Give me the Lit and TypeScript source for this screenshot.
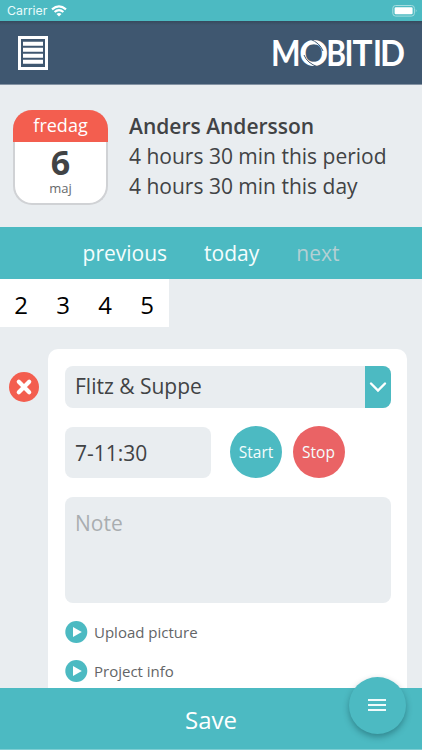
import { LitElement, html, svg, css } from "lit";
import { customElement } from "lit/decorators.js";

const LOGO = [
  { ch: "M", x: 1, w: 29.6 },
  { ch: "O", x: 29.2, w: 29 },
  { ch: "B", x: 56.3, w: 19.8 },
  { ch: "I", x: 74.4, w: 9 },
  { ch: "T", x: 82.5, w: 20 },
  { ch: "I", x: 102.9, w: 9 },
  { ch: "D", x: 110, w: 25 },
];

@customElement("app-root")
export class AppRoot extends LitElement {
  static styles = css`
    :host {
      display: flex;
      flex-direction: column;
      position: relative;
      height: 750px;
      overflow: hidden;
      background: #e9edf0;
      color: #414345;
      font-family: "Open Sans", "Noto Sans", sans-serif;
    }
    * { box-sizing: border-box; }
    svg { display: block; }
    .status {
      flex: none;
      height: 21px;
      background: #4cbac2;
      color: #fff;
      display: flex;
      align-items: center;
      padding: 1px 4px 0 7px;
      font: 12.3px/20px Inter, Roboto, sans-serif;
    }
    .carrier { width: 44px; white-space: nowrap; color: #e9fbfb; }
    .battery { margin-left: auto; }
    .header {
      flex: none;
      height: 64px;
      background: linear-gradient(#36495d, #3f5770 4px, #3f5770);
      display: flex;
      align-items: center;
      padding: 0 16px 0 18px;
      justify-content: space-between;
      border-bottom: 1px solid #8493a4;
    }
    .logo-text { font: 700 36px Lato, sans-serif; fill: #fff; }
    .person {
      flex: none;
      height: 142px;
      display: flex;
      padding: 25px 13px 0;
      gap: 21px;
    }
    .date {
      width: 95px;
      height: 95px;
      border-radius: 19px;
      background: #fff;
      border: 2px solid #d0d2d5;
      border-top: 0;
      border-bottom-width: 2px;
      text-align: center;
      display: flex;
      flex-direction: column;
    }
    .weekday {
      margin: 0 -2px;
      height: 32px;
      background: #f35e4f;
      border-radius: 19px 19px 0 0;
      color: #fff;
      font-size: 18px;
      line-height: 31px;
    }
    .day { font-size: 34px; line-height: 40px; font-weight: 700; }
    .month { font-size: 13px; line-height: 14px; margin-top: -1px; color: #66686a; }
    .summary { font-size: 21px; line-height: 30px; white-space: nowrap; padding-top: 1px; }
    .name { font-weight: 600; }
    .nav {
      flex: none;
      height: 52px;
      background: #4cbac2;
      color: #f4fdfd;
      display: flex;
      justify-content: center;
      gap: 37px;
      font-size: 21px;
      line-height: 53px;
    }
    .off { color: #b4d0d4; }
    .days {
      flex: none;
      width: 169px;
      height: 48px;
      background: #fff;
      color: #000;
      display: grid;
      grid-template-columns: repeat(4, 42px);
      text-align: center;
      font-size: 24px;
      line-height: 51px;
    }
    .entry {
      flex: 1;
      min-height: 0;
      display: flex;
      padding: 22px 15px 0 9px;
      gap: 9px;
    }
    .remove { width: 30px; flex: none; padding-top: 23px; }
    .card {
      flex: 1;
      background: #fff;
      border-radius: 10px 10px 0 0;
      padding: 17px 16px 0 17px;
    }
    .field { background: #e9edf0; border-radius: 8px; font-size: 21px; padding-left: 10px; }
    .select {
      height: 42px;
      line-height: 41px;
      display: flex;
      justify-content: space-between;
      overflow: hidden;
    }
    .arrow {
      width: 26px;
      background: #4cbac2;
      display: grid;
      place-items: center;
    }
    .times { display: flex; margin-top: 18px; height: 53px; }
    .time { width: 146px; height: 51px; margin-top: 1px; line-height: 52px; }
    .round {
      width: 52px;
      height: 52px;
      border-radius: 50%;
      background: #4cbac2;
      color: #f4fdfd;
      text-align: center;
      font-size: 15.5px;
      line-height: 52px;
      margin-left: 19px;
    }
    .stop { background: #ea6365; margin-left: 10.5px; }
    .note { margin-top: 18px; height: 106px; line-height: 53px; color: #a9adb0; }
    .links { margin-top: 17px; display: grid; gap: 15px; }
    .link { display: flex; align-items: center; gap: 6px; height: 24px; font-size: 15px; color: #636567; }
    .save {
      flex: none;
      height: 62px;
      background: #4cbac2;
      border-bottom: 1px solid #7fced3;
      color: #fff;
      text-align: center;
      font-size: 24px;
      line-height: 63px;
    }
    .fab {
      position: absolute;
      right: 16.5px;
      bottom: 16.5px;
      width: 57px;
      height: 57px;
      border-radius: 50%;
      background: #4cbac2;
      box-shadow: 0 3px 6px rgba(0, 40, 50, 0.35);
      display: grid;
      place-items: center;
    }
  `;

  private link(label: string) {
    return html`<div class="link">
      <svg width="23" height="23" viewBox="0 0 23 23">
        <circle cx="11.3" cy="11" r="11" fill="#4cbac2" />
        <path d="M8 6 L16.8 11 L8 16 Z" fill="#fff" />
      </svg>
      <span>${label}</span>
    </div>`;
  }

  render() {
    return html`
      <div class="status">
        <span class="carrier">Carrier</span>
        <svg width="16" height="12" viewBox="0 0 16 12" fill="none" stroke="#fff" stroke-width="2.1">
          <path d="M1 4.4 Q8 -1.8 15 4.4" />
          <path d="M3.6 7 Q8 3.1 12.4 7" />
          <path d="M5.5 9 Q8 7 10.5 9 L8 11.5 Z" fill="#fff" stroke="none" />
        </svg>
        <svg class="battery" width="26" height="12" viewBox="0 0 26 12">
          <rect x="0.8" y="0.5" width="21.6" height="10.6" rx="2.8" fill="none" stroke="#a5dde0" />
          <rect x="2.6" y="2.3" width="18" height="7" rx="1.2" fill="#fff" />
          <path d="M23.8 4 Q25.4 5.8 23.8 7.6 Z" fill="#a5dde0" />
        </svg>
      </div>
      <div class="header">
        <svg width="30" height="34" viewBox="0 0 30 34">
          <rect x="1.5" y="1.5" width="27" height="31" fill="none" stroke="#fff" stroke-width="3" />
          <path d="M5 7.7H25M5 13.7H25M5 19.7H25M5 25.7H25" stroke="#fff" stroke-width="4" />
        </svg>
        <svg width="136" height="40" viewBox="0 0 136 40">
          ${LOGO.map(
            (l) => svg`<text class="logo-text" x=${l.x} y="33" textLength=${l.w} lengthAdjust="spacingAndGlyphs">${l.ch}</text>`
          )}
          <path d="M40 6 Q50 10 53 18M34 22 Q37 30 48 34" fill="none" stroke="#3f5770" stroke-width="1" />
        </svg>
      </div>
      <div class="person">
        <div class="date">
          <div class="weekday">fredag</div>
          <div class="day">6</div>
          <div class="month">maj</div>
        </div>
        <div class="summary">
          <div class="name">Anders Andersson</div>
          <div>4 hours 30 min this period</div>
          <div>4 hours 30 min this day</div>
        </div>
      </div>
      <div class="nav"><span>previous</span><span>today</span><span class="off">next</span></div>
      <div class="days">${[2, 3, 4, 5].map((d) => html`<span>${d}</span>`)}</div>
      <div class="entry">
        <div class="remove">
          <svg width="30" height="30" viewBox="0 0 30 30">
            <circle cx="15" cy="15" r="15" fill="#f35e4f" />
            <path d="M9.8 9.8 L20.2 20.2 M20.2 9.8 L9.8 20.2" stroke="#fff" stroke-width="4.2" stroke-linecap="round" />
          </svg>
        </div>
        <div class="card">
          <div class="field select">
            <span>Flitz &amp; Suppe</span>
            <span class="arrow">
              <svg width="18" height="12" viewBox="0 0 18 12">
                <path d="M2 2.5 L9 9.5 L16 2.5" fill="none" stroke="#fff" stroke-width="2.4" stroke-linecap="round" />
              </svg>
            </span>
          </div>
          <div class="times">
            <div class="field time">7-11:30</div>
            <div class="round">Start</div>
            <div class="round stop">Stop</div>
          </div>
          <div class="field note">Note</div>
          <div class="links">${this.link("Upload picture")}${this.link("Project info")}</div>
        </div>
      </div>
      <div class="save">Save</div>
      <div class="fab">
        <svg width="18" height="14" viewBox="0 0 18 14">
          <path d="M0 2H18M0 7H18M0 12H18" stroke="#f0fbfb" stroke-width="2.2" />
        </svg>
      </div>
    `;
  }
}
